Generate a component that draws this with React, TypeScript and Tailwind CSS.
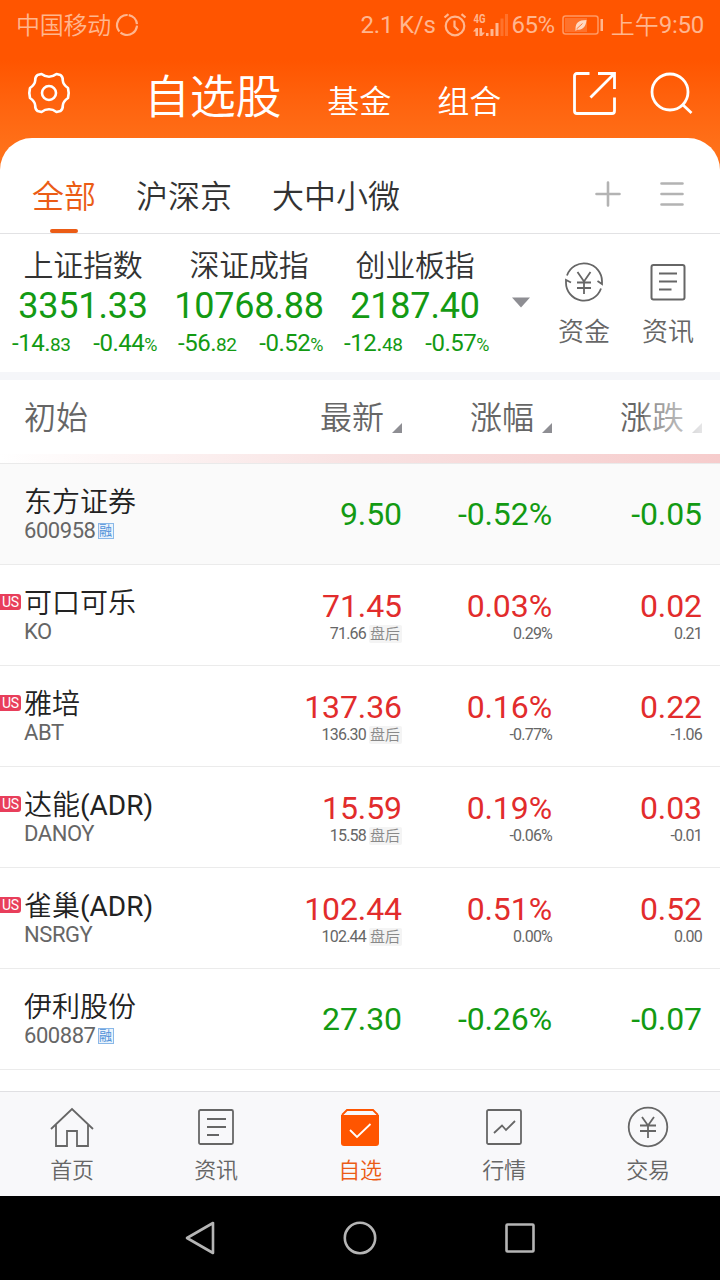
import type { ReactNode } from "react"

const indexes = [
    { name: "上证指数", value: "3351.33", diff: "-14.", diffSmall: "83", pct: "-0.44" },
    { name: "深证成指", value: "10768.88", diff: "-56.", diffSmall: "82", pct: "-0.52" },
    { name: "创业板指", value: "2187.40", diff: "-12.", diffSmall: "48", pct: "-0.57" },
]

type Stock = {
    name: string
    suffix?: string
    code: string
    price: string
    pct: string
    diff: string
    us?: boolean
    after?: string[]
}

const stocks: Stock[] = [
    { name: "东方证券", code: "600958", price: "9.50", pct: "-0.52%", diff: "-0.05" },
    { name: "可口可乐", code: "KO", price: "71.45", pct: "0.03%", diff: "0.02", us: true, after: ["71.66", "0.29%", "0.21"] },
    { name: "雅培", code: "ABT", price: "137.36", pct: "0.16%", diff: "0.22", us: true, after: ["136.30", "-0.77%", "-1.06"] },
    { name: "达能", suffix: "(ADR)", code: "DANOY", price: "15.59", pct: "0.19%", diff: "0.03", us: true, after: ["15.58", "-0.06%", "-0.01"] },
    { name: "雀巢", suffix: "(ADR)", code: "NSRGY", price: "102.44", pct: "0.51%", diff: "0.52", us: true, after: ["102.44", "0.00%", "0.00"] },
    { name: "伊利股份", code: "600887", price: "27.30", pct: "-0.26%", diff: "-0.07" },
]

function StatusBar() {
    return (
        <div className="flex h-[50px] items-center pl-4 pr-4 text-[24px] leading-[50px] text-[#ffb68f]">
            <span className="pt-0.5 font-[350] tracking-[-0.01em]">中国移动</span>
            <svg className="ml-[4px]" width="24" height="24" viewBox="0 0 24 24" fill="none" stroke="currentColor" strokeWidth="2.200">
                <circle cx="12" cy="12" r="10" strokeDasharray="13 1.500 22 1.500 23.300 1.500" transform="rotate(-80 12 12)" />
            </svg>
            <span className="ml-auto tracking-[-0.01em]">2.1 K/s</span>
            <svg className="ml-[7px]" width="24" height="24" viewBox="0 0 24 24" fill="none" stroke="currentColor" strokeWidth="2.200">
                <circle cx="12" cy="13" r="9.300" />
                <path d="M11.500 7.500v6l4 4M1.500 4.500l4-3.300M22.500 4.500l-4-3.300" />
            </svg>
            <div className="ml-[6px] flex h-[30px] w-[35px] items-end pb-[3px]">
                <svg className="overflow-visible" width="35" height="28" viewBox="0 -4 35 28" fill="currentColor">
                    <text x="0.500" y="10" fontSize="12" fontWeight="700" textLength="12" lengthAdjust="spacingAndGlyphs">4G</text>
                    <path d="M2.500 15h2.500v8H2.500zM0 18.500l3-3.500v3.500zM6.500 15H9v8H6.500zM9 23l3-3.500H9zM13 20h2.500v3H13zM17.500 16h3v7h-3zM22.500 10h3v13h-3z" />
                    <path d="M27.500 5.500h3V23h-3zM32 1h3v22h-3z" opacity=".3" />
                </svg>
            </div>
            <span className="ml-[4px] tracking-[-0.02em]">65%</span>
            <svg className="ml-[7px]" width="42" height="20" viewBox="0 0 42 20" fill="none" stroke="currentColor">
                <rect x="1" y="1" width="35" height="18" rx="2.500" strokeWidth="1.500" opacity=".7" />
                <path d="M3 3h22v14H3z" fill="currentColor" stroke="none" opacity=".3" />
                <path d="M38.500 4h2.500v12h-2.500z" fill="currentColor" stroke="none" />
                <path d="M13.500 14c0-6 3-9 11-9-.5 7.500-5 10.500-9 9.500l-2 1.500z" fill="#ffd9c4" stroke="none" />
                <path d="M14.500 14l6-5.500" stroke="#ff7a38" />
            </svg>
            <span className="ml-[7px] pt-0.5 font-[350]">上午</span>
            <span className="tracking-[-0.01em]">9:50</span>
        </div>
    )
}

function TopBar() {
    return (
        <div className="flex h-[88px] items-center pl-[27px] pr-[27px] font-[350] text-white">
            <svg className="-mt-0.5" width="44" height="44" viewBox="0 0 44 44" fill="none" stroke="currentColor" strokeWidth="2.600" strokeLinejoin="round">
                <circle cx="22" cy="22" r="7" />
                <path d="M10.500 4L14.500 3Q18 5.700 22 5.700Q26 5.700 29.500 3L33.500 4Q36 6 35.800 9.500Q36 13.500 41 17L41.700 22L41 27Q36 30.500 35.800 34.500Q36 38 33.500 40L29.500 41Q26 38.300 22 38.300Q18 38.300 14.500 41L10.500 40Q8 38 8.200 34.500Q8 30.500 3 27L2.300 22L3 17Q8 13.500 8.200 9.500Q8 6 10.500 4Z" />
            </svg>
            <div className="ml-[73px] flex items-baseline pt-[6px]">
                <h1 className="text-[46px] leading-[60px] tracking-[-0.005em]">自选股</h1>
                <span className="ml-[46px] text-[32px]">基金</span>
                <span className="ml-[46px] text-[32px]">组合</span>
            </div>
            <svg className="-mt-[3px] ml-auto" width="44" height="44" viewBox="0 0 44 44" fill="none" stroke="currentColor" strokeWidth="2.800">
                <path d="M17.500 2.500H5Q2.500 2.500 2.500 5v35q0 2.500 2.500 2.500h35q2.500 0 2.500-2.500V26.500M26 2.500h16.500V18M42 3L18.500 26.500" />
            </svg>
            <svg className="-mt-[3px] ml-[34px]" width="43" height="44" viewBox="0 0 43 44" fill="none" stroke="currentColor" strokeWidth="2.800">
                <circle cx="20" cy="21" r="18" />
                <path d="M32.500 33.500l9 8.500" />
            </svg>
        </div>
    )
}

function Tabs() {
    return (
        <div className="flex h-24 items-start border-b border-[#e2e2e4] pl-8 pr-9 pt-[34px] text-[32px] font-[350] leading-[50px] text-[#333]">
            <div className="flex flex-col items-center text-[#eb5c15]">
                <span>全部</span>
                <span className="mt-[7px] h-1 w-7 rounded-sm bg-[#eb5c15]" />
            </div>
            <span className="ml-10">沪深京</span>
            <span className="ml-10">大中小微</span>
            <svg className="ml-auto mt-[9px]" width="26" height="26" viewBox="0 0 26 26" stroke="#b3b3b3" strokeWidth="2.600" strokeLinecap="round">
                <path d="M13 1.500v23M1.500 13h23" />
            </svg>
            <svg className="ml-[39px] mt-[9px]" width="24" height="26" viewBox="0 0 24 26" stroke="#b3b3b3" strokeWidth="2.600" strokeLinecap="round">
                <path d="M1.500 2.500h21M1.500 13h21M1.500 23.500h21" />
            </svg>
        </div>
    )
}

function IndexPanel() {
    return (
        <div className="flex h-[138px] text-[#139a13]">
            {indexes.map((item) => (
                <div key={item.name} className="flex w-[166px] flex-col items-center pl-[11px] pr-[9px] pt-[13px]">
                    <span className="-ml-0.5 text-[30px] font-[350] leading-[38px] tracking-[-0.01em] text-[#333]">{item.name}</span>
                    <span className="-ml-0.5 text-[36px] leading-[42px] tracking-[-0.005em]">{item.value}</span>
                    <div className="-mt-px flex w-full justify-between whitespace-nowrap text-[24px] leading-[34px] tracking-[-0.02em]">
                        <span className="pl-px">{item.diff}<span className="text-[19px]">{item.diffSmall}</span></span>
                        <span>{item.pct}<span className="text-[18px]">%</span></span>
                    </div>
                </div>
            ))}
            <svg className="ml-[14px] mt-[63px]" width="18" height="11" viewBox="0 0 18 11" fill="#8e8e93">
                <path d="M0 .5h18L9 10.500z" />
            </svg>
            <div className="ml-7 flex flex-col items-center pt-7 text-[26px] font-[350] leading-[36px] text-[#666]">
                <svg width="40" height="40" viewBox="0 0 40 40" fill="none" stroke="currentColor" strokeWidth="1.800">
                    <path d="M3 13.500A18 18 0 0 1 38 20v2l-4.500-3M37 26.500A18 18 0 0 1 2 20v-2l5 2.500" />
                    <path d="M13.500 10l6.500 9.500L26.500 10M13 20.500h14M13 26h14M20 20v12" />
                </svg>
                <span className="mt-3">资金</span>
            </div>
            <div className="ml-8 flex flex-col items-center pt-7 text-[26px] font-[350] leading-[36px] text-[#666]">
                <NewsIcon />
                <span className="mt-3">资讯</span>
            </div>
        </div>
    )
}

function NewsIcon() {
    return (
        <svg width="40" height="40" viewBox="0 0 40 40" fill="none" stroke="currentColor" strokeWidth="2">
            <rect x="3.500" y="3" width="33" height="34.500" rx="2" />
            <path d="M11 11.500h18M11 19.500h18M11 27.500h12.500" />
        </svg>
    )
}

function SortHead({ label }: { label: string }) {
    return (
        <div className="flex w-[150px] items-end justify-end gap-2">
            <span>{label}</span>
            <svg className="mb-[12px]" width="10" height="10" viewBox="0 0 10 10" fill="#8e8e93">
                <path d="M10 0v10H0z" />
            </svg>
        </div>
    )
}

function TableHead() {
    return (
        <div>
            <div className="relative flex h-[74px] items-center pl-6 pr-[18px] pt-px text-[32px] font-[350] leading-[54px] text-[#666]">
                <span className="mr-auto">初始</span>
                <SortHead label="最新" />
                <SortHead label="涨幅" />
                <SortHead label="涨跌" />
                <div className="absolute right-0 top-0 h-full w-[76px] bg-linear-to-r from-white/20 to-white/95" />
            </div>
            <div className="h-[9px] bg-linear-to-r from-white via-[#f8e2e2] to-[#f6cccc]" />
            <div className="h-px bg-[#eaeaea]" />
        </div>
    )
}

function Cell({ value, sub, tag }: { value: string; sub?: string; tag?: boolean }) {
    return (
        <div className="flex w-[150px] flex-col items-end justify-center">
            <span className="text-[32px] leading-[38px] tracking-[-0.003em]">{value}</span>
            {sub && (
                <div className="flex items-center text-[16px] leading-[18px] tracking-[-0.05em] text-[#666]">
                    <span>{sub}</span>
                    {tag && <span className="ml-[3px] h-[18px] rounded-xs bg-[#f4f4f4] pl-px pr-0.5 text-[15px] font-[350] tracking-normal text-[#888]">盘后</span>}
                </div>
            )}
        </div>
    )
}

function StockRow({ stock, active }: { stock: Stock; active: boolean }) {
    return (
        <div className={`flex h-[101px] border-b border-[#ebebeb] pr-[18px] ${active ? "bg-[#fafafa]" : "bg-white"}`}>
            <div className="w-6 pt-[29px]">
                {stock.us && <span className="block h-4 w-[21px] rounded-r-[3px] bg-[#e83e5b] pl-0.5 text-[14px] leading-4 tracking-[-0.03em] text-white">US</span>}
            </div>
            <div className="mr-auto flex flex-col pt-[21px]">
                <span className="text-[28px] font-[350] leading-9 text-[#222]">
                    {stock.name}
                    {stock.suffix && <span className="font-normal">{stock.suffix}</span>}
                </span>
                <div className="-mt-0.5 flex items-center text-[22px] leading-6 tracking-[-0.02em] text-[#666]">
                    {stock.code}
                    {!stock.us && <span className="ml-0.5 h-4 w-4 border border-[#8ab8e8] bg-[#eaf3fc] text-center text-[13px] leading-[14px] tracking-normal text-[#4e90d8]">融</span>}
                </div>
            </div>
            <div className={`flex ${stock.us ? "text-[#e22c2c]" : "text-[#139a13]"}`}>
                <Cell value={stock.price} sub={stock.after?.[0]} tag />
                <Cell value={stock.pct} sub={stock.after?.[1]} />
                <Cell value={stock.diff} sub={stock.after?.[2]} />
            </div>
        </div>
    )
}

function NavItem({ label, active, children }: { label: string; active?: boolean; children: ReactNode }) {
    return (
        <div className={`flex w-36 flex-col items-center pt-[13px] text-[22px] font-[350] ${active ? "text-[#eb5c15]" : "text-[#666]"}`}>
            <svg width="44" height="44" viewBox="0 0 44 44" fill="none" stroke="currentColor" strokeWidth="1.800">
                {children}
            </svg>
            <span className="mt-[7px] leading-[30px] tracking-[-0.01em]">{label}</span>
        </div>
    )
}

function BottomNav() {
    return (
        <div className="flex h-[105px] border-t border-[#e0e0e3] bg-[#f8f8fa]">
            <NavItem label="首页">
                <path d="M1 24L22 4l21 20M6 20v21h11V26h10v15h11V20" />
            </NavItem>
            <NavItem label="资讯">
                <rect x="5" y="5" width="34" height="34" rx="1.500" />
                <path d="M13 14h19M13 22h19M13 30h12" />
            </NavItem>
            <NavItem label="自选" active>
                <path d="M4 10l5-5h26l5 5" stroke="#ff5500" />
                <path d="M3 10h38v28q0 3-3 3H6q-3 0-3-3z" fill="#ff5500" stroke="none" />
                <path d="M12 25l7 7 13.500-13" stroke="white" />
            </NavItem>
            <NavItem label="行情">
                <rect x="5" y="5" width="34" height="34" rx="1.500" />
                <path d="M12 28l8-7.500 4 4.500 9-9" />
            </NavItem>
            <NavItem label="交易">
                <circle cx="22" cy="22" r="19.300" />
                <path d="M16 12l6 8.500 6-8.500M14 20.500h16M14 26h16M22 20v13" />
            </NavItem>
        </div>
    )
}

function SystemNav() {
    return (
        <div className="flex h-[84px] items-center justify-center gap-[124px] bg-black">
            <svg width="36" height="36" viewBox="0 0 36 36" fill="none" stroke="#b5b5b5" strokeWidth="2.600" strokeLinejoin="round">
                <path d="M31 3v30L5 18z" />
            </svg>
            <svg width="36" height="36" viewBox="0 0 36 36" fill="none" stroke="#b5b5b5" strokeWidth="2.600">
                <circle cx="18" cy="18" r="15.200" />
            </svg>
            <svg width="36" height="36" viewBox="0 0 36 36" fill="none" stroke="#b5b5b5" strokeWidth="2.600">
                <rect x="4.500" y="4.500" width="27" height="27" rx="1" />
            </svg>
        </div>
    )
}

export default function App() {
    return (
        <div className="flex h-[1280px] w-[720px] flex-col overflow-hidden bg-white font-[Roboto,'Noto_Sans_CJK_SC',sans-serif]">
            <div className="bg-linear-to-b from-[#ff5500] from-[60px] to-[#ff7119] to-[150px]">
                <StatusBar />
                <TopBar />
                <div className="rounded-t-[32px] bg-white">
                    <Tabs />
                </div>
            </div>
            <IndexPanel />
            <div className="h-2 bg-[#f5f6f9]" />
            <TableHead />
            {stocks.map((stock, i) => (
                <StockRow key={stock.code} stock={stock} active={i === 0} />
            ))}
            <div className="mt-auto">
                <BottomNav />
                <SystemNav />
            </div>
        </div>
    )
}
